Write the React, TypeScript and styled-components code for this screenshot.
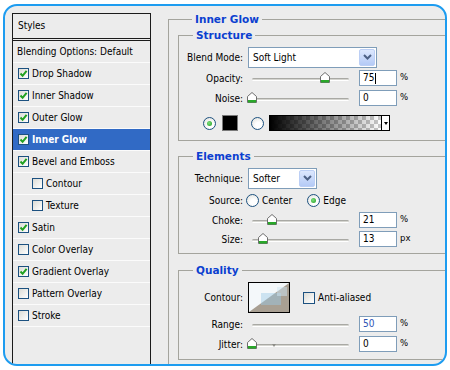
import * as React from 'react'
import styled, { createGlobalStyle } from 'styled-components'

const GlobalStyle = createGlobalStyle`
  html, body {
    margin: 0;
    background: #fff;
  }
  body {
    font-family: "DejaVu Sans Condensed", "Liberation Sans", sans-serif;
    font-size: 10px;
    color: #000;
  }
`

const Frame = styled.div`
  box-sizing: border-box;
  width: 444px;
  height: 362px;
  margin: 4px 0 0 3px;
  padding: 7px 0 0 7px;
  border: 2px solid #1d9cf0;
  border-radius: 14px;
  background: #ececec;
  overflow: hidden;
  display: flex;
`

const StylesPanel = styled.div`
  flex: none;
  width: 137px;
  border: 1px solid #1b1b1b;
  border-bottom: none;
`

const PanelHeader = styled.div`
  height: 24px;
  line-height: 24px;
  padding-left: 5px;
  border-bottom: 3px double #1b1b1b;
`

const StyleItem = styled.div<{ $indent?: boolean; $selected?: boolean; $plain?: boolean }>`
  display: flex;
  align-items: center;
  gap: 3px;
  height: 21px;
  padding-left: ${p => (p.$plain ? 4 : p.$indent ? 19 : 5)}px;
  border-bottom: 1px solid #fbfbfb;
  background: ${p => (p.$selected ? '#316ac5' : 'transparent')};
  color: ${p => (p.$selected ? '#fff' : '#000')};
  font-weight: ${p => (p.$selected ? 'bold' : 'normal')};
  white-space: nowrap;
`

const CheckBox = styled.span<{ $size?: number }>`
  box-sizing: border-box;
  flex: none;
  width: ${p => p.$size ?? 11}px;
  height: ${p => p.$size ?? 11}px;
  border: 1px solid #1c5180;
  background: linear-gradient(135deg, #dcdcd6, #fff);
  display: flex;
  align-items: center;
  justify-content: center;
`

const Settings = styled.div`
  flex: none;
  width: 320px;
  margin-left: 17px;
`

const Group = styled.fieldset<{ $top?: number; $bottom?: number }>`
  margin: ${p => p.$top ?? 0}px 0 0 0;
  padding: 4px 0 ${p => p.$bottom ?? 5}px 0;
  border: 1px solid #a4a49d;
  min-width: 0;
`

const OuterGroup = styled(Group)`
  padding: 3px 0 40px 9px;
`

const Legend = styled.legend`
  margin-left: 14px;
  padding: 0 3px;
  font-family: "DejaVu Sans", "Liberation Sans", sans-serif;
  font-size: 10.5px;
  line-height: 13px;
  font-weight: bold;
  color: #0b3fd0;
`

const Row = styled.div<{ $h: number; $indent?: number }>`
  display: flex;
  align-items: center;
  height: ${p => p.$h}px;
  padding-left: ${p => p.$indent ?? 0}px;
  white-space: nowrap;
`

const Label = styled.span`
  flex: none;
  width: 64px;
  text-align: right;
`

const SelectBox = styled.div<{ $w: number }>`
  box-sizing: border-box;
  width: ${p => p.$w}px;
  height: 21px;
  margin-left: 5px;
  padding-left: 4px;
  border: 1px solid #7f9db9;
  background: #fff;
  display: flex;
  align-items: center;
  justify-content: space-between;
`

const SelectButton = styled.span`
  box-sizing: border-box;
  width: 16px;
  height: 17px;
  margin-right: 1px;
  border: 1px solid #bccff5;
  border-radius: 2px;
  background: linear-gradient(#dde8fe, #b4caf6);
  display: flex;
  align-items: center;
  justify-content: center;
`

const SliderArea = styled.div`
  position: relative;
  flex: none;
  width: 105px;
  height: 12px;
  margin-left: 5px;
`

const Track = styled.div`
  position: absolute;
  left: 4px;
  right: 4px;
  top: 6px;
  height: 1px;
  border-top: 1px solid #a9a9a4;
  border-bottom: 1px solid #fff;
  background: #d4d4cf;
  border-radius: 2px;
`

const Thumb = styled.svg`
  position: absolute;
  top: 0;
  margin-left: -5px;
`

const Tick = styled.span`
  position: absolute;
  top: 6px;
  width: 0;
  height: 0;
  margin-left: -2px;
  border-left: 2px solid transparent;
  border-right: 2px solid transparent;
  border-top: 3px solid #8d8d88;
`

const NumInput = styled.div<{ $blue?: boolean }>`
  box-sizing: border-box;
  flex: none;
  width: 38px;
  height: 16px;
  margin-left: 6px;
  padding-left: 3px;
  border: 1px solid #7f9db9;
  background: #fff;
  line-height: 14px;
  color: ${p => (p.$blue ? '#2f55b5' : '#000')};
  display: flex;
  align-items: center;
`

const Caret = styled.span`
  width: 1px;
  height: 11px;
  background: #000;
  margin-left: 1px;
`

const Unit = styled.span`
  margin-left: 3px;
  margin-top: -4px;
  font-size: 9.5px;
`

const Radio = styled.span<{ $on?: boolean }>`
  box-sizing: border-box;
  flex: none;
  width: 13px;
  height: 13px;
  border: 1px solid #1c5180;
  border-radius: 50%;
  background: radial-gradient(circle at 60% 65%, #fff 30%, #dcdcd6 100%);
  display: flex;
  align-items: center;
  justify-content: center;
  &::after {
    content: '';
    display: ${p => (p.$on ? 'block' : 'none')};
    width: 5px;
    height: 5px;
    border-radius: 50%;
    background: radial-gradient(circle at 40% 40%, #7ee07e, #1e9a1e);
  }
`

const RadioText = styled.span<{ $gap?: number }>`
  margin-left: 3px;
  margin-right: ${p => p.$gap ?? 0}px;
`

const ColorSwatch = styled.span`
  box-sizing: border-box;
  width: 16px;
  height: 16px;
  margin: 0 13px 0 6px;
  border: 1px solid #7a7a7a;
  background: #000;
`

const GradientBox = styled.span`
  box-sizing: border-box;
  width: 121px;
  height: 16px;
  margin-left: 5px;
  border: 1px solid #000;
  display: flex;
`

const GradientFill = styled.span`
  flex: 1;
  background:
    linear-gradient(to right, #000, rgba(0, 0, 0, 0)),
    repeating-conic-gradient(#c8c8c8 0 25%, #fff 0 50%) 0 0 / 8px 8px;
`

const GradientArrow = styled.span`
  width: 7px;
  border-left: 1px solid #000;
  background: #fff;
  display: flex;
  align-items: center;
  justify-content: center;
  &::after {
    content: '';
    border-left: 2.5px solid transparent;
    border-right: 2.5px solid transparent;
    border-top: 3px solid #000;
  }
`

const ContourPreview = styled.svg`
  flex: none;
  margin-left: 5px;
  border: 1px solid #000;
  margin-right: 13px;
`

const Check = () => (
  <svg width="9" height="9" viewBox="0 0 9 9">
    <path d="M1.5 4.5 L3.6 6.8 L7.6 1.8" fill="none" stroke="#21a121" strokeWidth="2" />
  </svg>
)

const Chevron = () => (
  <svg width="9" height="6" viewBox="0 0 9 6">
    <path d="M1 1 L4.5 4.5 L8 1" fill="none" stroke="#4d6185" strokeWidth="2" />
  </svg>
)

const Slider: React.FC<{ pos?: number; tick?: number }> = ({ pos, tick }) => (
  <SliderArea>
    <Track />
    {tick !== undefined && <Tick style={{ left: `${4 + (tick * 97) / 100}px` }} />}
    {pos !== undefined && (
      <Thumb width="10" height="11" viewBox="0 0 10 11" style={{ left: `${4 + (pos * 97) / 100}px` }}>
        <path d="M5 0.5 L9.5 4.5 V10.5 H0.5 V4.5 Z" fill="#fff" stroke="#6e6e6e" />
        <rect x="1" y="8" width="8" height="2.5" fill="#29a829" />
      </Thumb>
    )}
  </SliderArea>
)

const SliderRow: React.FC<{ label: string; h: number; value: string; unit: string; pos?: number; tick?: number; caret?: boolean; blue?: boolean }> = ({ label, h, value, unit, pos, tick, caret, blue }) => (
  <Row $h={h}>
    <Label>{label}</Label>
    <Slider pos={pos} tick={tick} />
    <NumInput $blue={blue}>
      {value}
      {caret && <Caret />}
    </NumInput>
    <Unit>{unit}</Unit>
  </Row>
)

const styleItems = [
  { name: 'Drop Shadow', checked: true },
  { name: 'Inner Shadow', checked: true },
  { name: 'Outer Glow', checked: true },
  { name: 'Inner Glow', checked: true, selected: true },
  { name: 'Bevel and Emboss', checked: true },
  { name: 'Contour', indent: true },
  { name: 'Texture', indent: true },
  { name: 'Satin', checked: true },
  { name: 'Color Overlay' },
  { name: 'Gradient Overlay', checked: true },
  { name: 'Pattern Overlay' },
  { name: 'Stroke' },
]

const App: React.FC = (): JSX.Element => {
  return (
    <>
      <GlobalStyle />
      <Frame>
        <StylesPanel>
          <PanelHeader>Styles</PanelHeader>
          <StyleItem $plain>Blending Options: Default</StyleItem>
          {styleItems.map(item => (
            <StyleItem key={item.name} $indent={item.indent} $selected={item.selected}>
              <CheckBox>{item.checked && <Check />}</CheckBox>
              {item.name}
            </StyleItem>
          ))}
        </StylesPanel>

        <Settings>
          <OuterGroup>
            <Legend>Inner Glow</Legend>

            <Group>
              <Legend>Structure</Legend>
              <Row $h={22}>
                <Label>Blend Mode:</Label>
                <SelectBox $w={129}>
                  Soft Light
                  <SelectButton><Chevron /></SelectButton>
                </SelectBox>
              </Row>
              <SliderRow label="Opacity:" h={20} pos={75} value="75" unit="%" caret />
              <SliderRow label="Noise:" h={20} pos={0} value="0" unit="%" />
              <Row $h={24} $indent={24} style={{ marginTop: 3 }}>
                <Radio $on />
                <ColorSwatch />
                <Radio />
                <GradientBox>
                  <GradientFill />
                  <GradientArrow />
                </GradientBox>
              </Row>
            </Group>

            <Group $top={9} $bottom={4}>
              <Legend>Elements</Legend>
              <Row $h={22}>
                <Label>Technique:</Label>
                <SelectBox $w={69}>
                  Softer
                  <SelectButton><Chevron /></SelectButton>
                </SelectBox>
              </Row>
              <Row $h={22}>
                <Label>Source:</Label>
                <span style={{ width: 3 }} />
                <Radio />
                <RadioText $gap={15}>Center</RadioText>
                <Radio $on />
                <RadioText>Edge</RadioText>
              </Row>
              <SliderRow label="Choke:" h={18} pos={21} value="21" unit="%" />
              <SliderRow label="Size:" h={20} pos={11} value="13" unit="px" />
            </Group>

            <Group $top={10}>
              <Legend>Quality</Legend>
              <Row $h={33}>
                <Label>Contour:</Label>
                <ContourPreview width="40" height="29" viewBox="0 0 40 29">
                  <rect width="40" height="29" fill="#f4f8fa" />
                  <polygon points="0,29 40,0 40,29" fill="#a89f92" />
                  <rect x="12" y="10" width="20" height="12" fill="#9cc9e6" opacity="0.45" />
                  <rect x="28" y="4" width="10" height="9" fill="#cde6f3" opacity="0.5" />
                </ContourPreview>
                <CheckBox $size={12} />
                <RadioText>Anti-aliased</RadioText>
              </Row>
              <SliderRow label="Range:" h={20} value="50" unit="%" blue />
              <SliderRow label="Jitter:" h={20} pos={0} tick={23} value="0" unit="%" />
            </Group>
          </OuterGroup>
        </Settings>
      </Frame>
    </>
  )
}

export default App
